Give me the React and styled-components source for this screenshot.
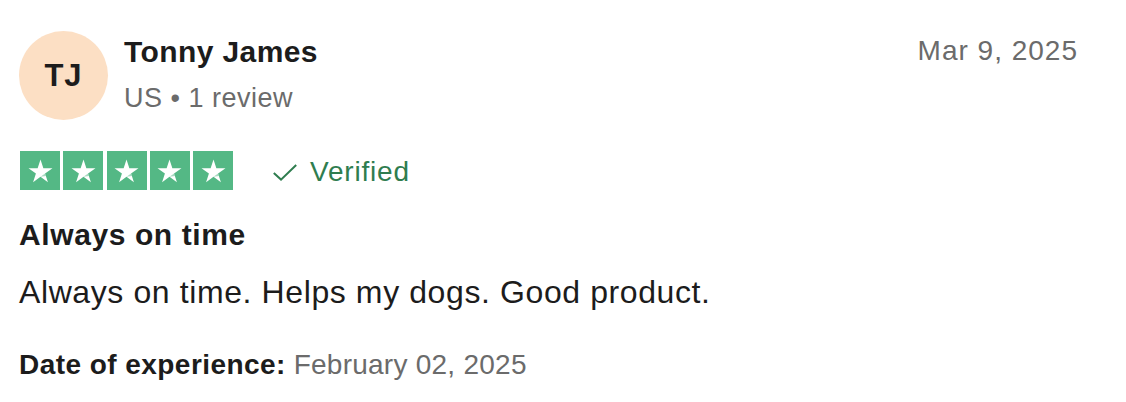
import React from 'react';
import styled, { createGlobalStyle } from 'styled-components';

const COLORS = {
  text: '#1c1c1c',
  muted: '#6b6b6b',
  green: '#54b885',
  greenDark: '#2f7d4f',
  peach: '#fcdfc4',
};

const GlobalStyle = createGlobalStyle`
  html, body {
    margin: 0;
    padding: 0;
    background: #ffffff;
  }
  body {
    font-family: 'Liberation Sans', Arial, Helvetica, sans-serif;
    color: ${COLORS.text};
  }
`;

const Card = styled.article`
  width: 1126px;
  height: 402px;
  box-sizing: border-box;
  padding: 31px 48px 0 19px;
  display: flex;
  flex-direction: column;
`;

const Header = styled.header`
  display: flex;
  align-items: flex-start;
  gap: 16px;
`;

const Avatar = styled.div`
  width: 89px;
  height: 89px;
  border-radius: 50%;
  background: ${COLORS.peach};
  display: flex;
  align-items: center;
  justify-content: center;
  font-weight: 700;
  font-size: 31px;
  letter-spacing: 1px;
  color: ${COLORS.text};
  flex-shrink: 0;
`;

const Who = styled.div`
  display: flex;
  flex-direction: column;
  flex: 1;
  padding-top: 4px;
`;

const Name = styled.div`
  font-size: 30px;
  font-weight: 700;
  line-height: 34px;
  letter-spacing: 0.4px;
`;

const Meta = styled.div`
  margin-top: 13px;
  font-size: 27px;
  line-height: 32px;
  letter-spacing: 0.5px;
  color: ${COLORS.muted};
`;

const DateText = styled.time`
  font-size: 28px;
  line-height: 32px;
  letter-spacing: 1px;
  color: ${COLORS.muted};
  padding-top: 4px;
`;

const RatingRow = styled.div`
  display: flex;
  align-items: center;
  margin: 31px 0 0 1px;
  gap: 40px;
`;

const Stars = styled.div`
  display: flex;
  gap: 3.25px;
`;

const StarBox = styled.span`
  width: 40px;
  height: 39px;
  background: ${COLORS.green};
  display: flex;
  align-items: center;
  justify-content: center;
`;

const Verified = styled.div`
  display: flex;
  align-items: baseline;
  gap: 13px;
  padding-top: 3px;
  font-size: 28px;
  line-height: 32px;
  letter-spacing: 0.8px;
  color: ${COLORS.greenDark};
`;

const Title = styled.h2`
  margin: 27px 0 0;
  font-size: 30px;
  font-weight: 700;
  line-height: 36px;
  letter-spacing: 0.6px;
`;

const Body = styled.p`
  margin: 20px 0 0;
  font-size: 32px;
  line-height: 38px;
  letter-spacing: 0.6px;
`;

const Experience = styled.p`
  margin: 38px 0 0;
  font-size: 28px;
  line-height: 32px;
`;

const Label = styled.strong`
  font-weight: 700;
  letter-spacing: 0.45px;
`;

const Muted = styled.span`
  color: ${COLORS.muted};
  letter-spacing: 0.25px;
`;

const Star = () => (
  <svg width="25" height="24" viewBox="0 0 24 23">
    <path
      d="M12 0.5l2.75 8.3H23.5l-7.1 5.15 2.72 8.35L12 17.1l-7.12 5.2 2.72-8.35L0.5 8.8h8.75z"
      fill="#ffffff"
    />
    <path d="M16.4 13.95l0.75 2.3L12 17.1z" fill={COLORS.green} opacity="0.5" />
  </svg>
);

const Check = () => (
  <svg width="24" height="18" viewBox="0 0 24 18" fill="none">
    <path d="M0.8 10l7.2 6.6L23.2 2" stroke={COLORS.greenDark} strokeWidth="2" />
  </svg>
);

const App = () => (
  <>
    <GlobalStyle />
    <Card>
      <Header>
        <Avatar>TJ</Avatar>
        <Who>
          <Name>Tonny James</Name>
          <Meta>US • 1 review</Meta>
        </Who>
        <DateText>Mar 9, 2025</DateText>
      </Header>
      <RatingRow>
        <Stars>
          {[0, 1, 2, 3, 4].map((i) => (
            <StarBox key={i}>
              <Star />
            </StarBox>
          ))}
        </Stars>
        <Verified>
          <Check />
          Verified
        </Verified>
      </RatingRow>
      <Title>Always on time</Title>
      <Body>Always on time. Helps my dogs. Good product.</Body>
      <Experience>
        <Label>Date of experience:</Label> <Muted>February 02, 2025</Muted>
      </Experience>
    </Card>
  </>
);

export default App;
